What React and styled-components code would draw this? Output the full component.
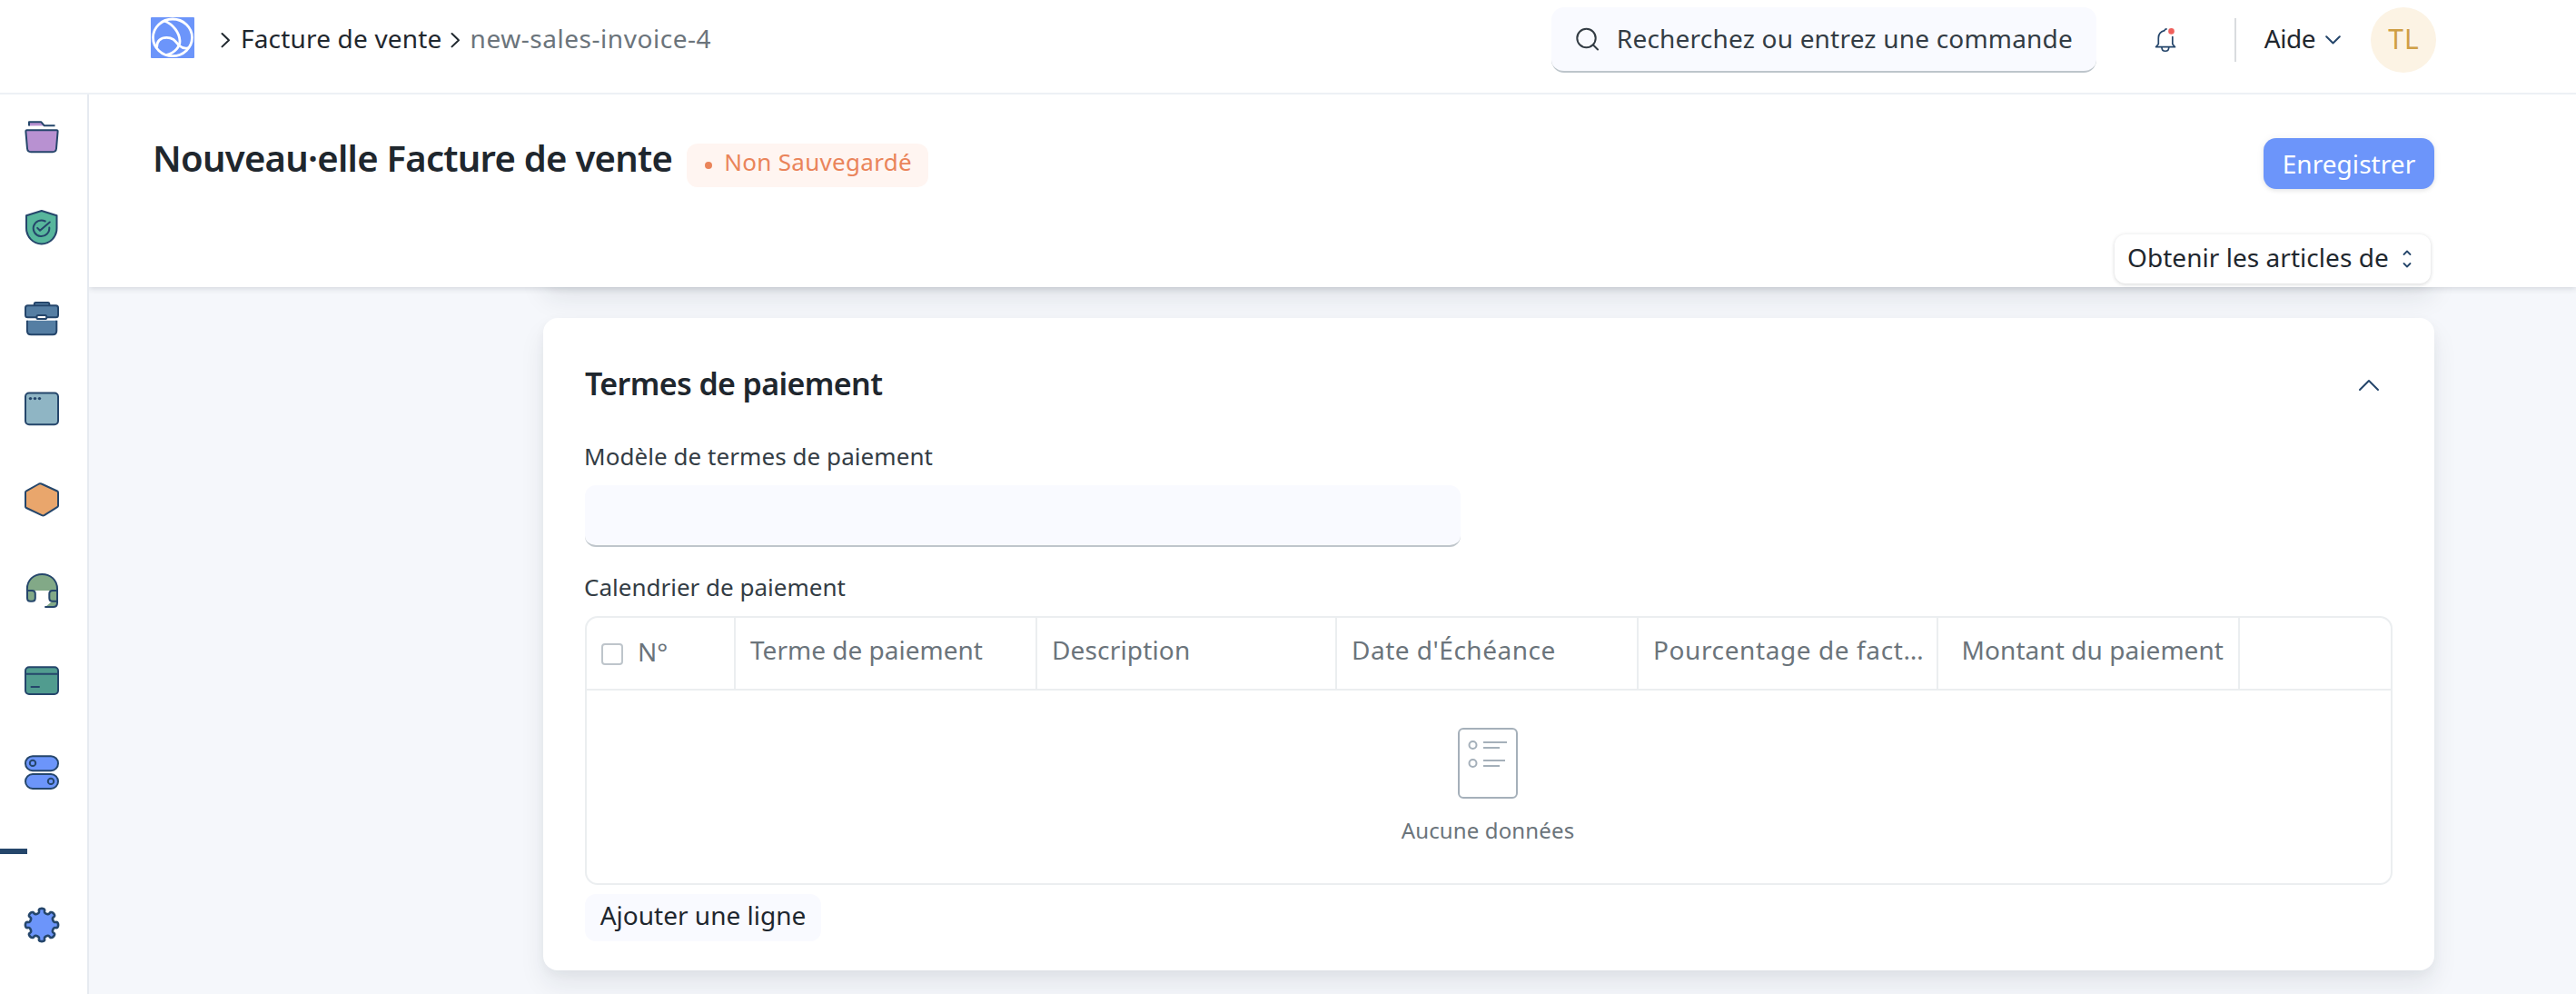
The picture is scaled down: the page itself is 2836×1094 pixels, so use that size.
import React from 'react';
import styled, { createGlobalStyle } from 'styled-components';

const ink = '#1f272e';
const navy = '#25466b';
const muted = '#6b747b';
const line = '#ebeef0';
const blue = '#6c95fa';

const GlobalStyle = createGlobalStyle`
  * { box-sizing: border-box; }
  body {
    margin: 0;
    background: #fff;
    color: ${ink};
    font-family: "Noto Sans", "Open Sans", sans-serif;
    font-size: 28px;
    line-height: 40px;
  }
  svg { display: block; flex: none; }
`;

const Page = styled.div`
  display: flex;
  flex-direction: column;
  width: 2836px;
  height: 1094px;
  overflow: hidden;
`;

const Text = styled.span`
  white-space: pre;
  letter-spacing: ${(p) => p.$ls || 0}px;
`;

/* Top bar */
const Navbar = styled.header`
  display: flex;
  justify-content: space-between;
  height: 104px;
  padding: 8px 154px 22px 166px;
  border-bottom: 2px solid #edf1f5;
`;

const Breadcrumbs = styled.nav`
  display: flex;
  align-items: center;
  height: 66px;
`;

const Logo = styled.svg`
  margin: 0 29px 0 0;
`;

const Crumb = styled(Text)`
  margin: 0 9px 0 11px;
  padding-top: 1px;
  color: ${(p) => (p.$current ? muted : ink)};
`;

const CrumbChevron = styled.svg`
  margin-top: 5px;
`;

const NavTools = styled.div`
  display: flex;
  align-items: center;
  height: 72px;
`;

const SearchBox = styled.div`
  display: flex;
  align-items: center;
  gap: 20px;
  width: 600px;
  height: 72px;
  padding: 0 27px;
  border-radius: 14px;
  background: #f9faff;
  border-bottom: 2px solid #bdc5cb;
  color: #333c44;
`;

const SearchText = styled(Text)`
  padding-bottom: 3px;
`;

const Bell = styled.svg`
  margin: 0 64px;
`;

const Divider = styled.span`
  width: 2px;
  height: 48px;
  background: #d9dcdf;
`;

const HelpMenu = styled.div`
  display: flex;
  align-items: center;
  gap: 11px;
  margin: 0 33px 0 31px;
`;

const HelpText = styled(Text)`
  padding-bottom: 4px;
`;

const Avatar = styled.div`
  display: flex;
  align-items: center;
  justify-content: center;
  width: 72px;
  height: 72px;
  padding: 0 0 3px 1px;
  border-radius: 50%;
  background: #fcf3e4;
  color: #cf9f45;
  font-size: 30px;
`;

/* Left rail */
const Main = styled.div`
  display: flex;
  flex: 1;
  min-height: 0;
`;

const Rail = styled.aside`
  display: flex;
  flex-direction: column;
  width: 98px;
  padding-top: 26px;
  border-right: 2px solid #e6eaf0;
`;

const RailIcons = styled.div`
  display: flex;
  flex-direction: column;
  gap: 60px;
  padding-left: 26px;
`;

const RailMark = styled.div`
  width: 30px;
  height: 6px;
  margin: 64px 0 58px;
  background: ${navy};
`;

const RailFooter = styled.div`
  padding-left: 26px;
`;

const RailSvg = styled.svg.attrs({ width: 40, height: 40, viewBox: '0 0 40 40' })`
  stroke: ${navy};
  stroke-width: 2;
  stroke-linecap: round;
  stroke-linejoin: round;
`;

/* Page head */
const Content = styled.section`
  display: flex;
  flex-direction: column;
  flex: 1;
  min-width: 0;
`;

const PageHead = styled.div`
  position: relative;
  z-index: 1;
  height: 212px;
  padding: 45px 156px 0 70px;
  background: #fff;
  box-shadow: 0 1px 7px rgba(25, 39, 52, 0.18);
  clip-path: inset(0 0 -20px 0);
`;

const HeadRow = styled.div`
  display: flex;
  align-items: flex-start;
  height: 109px;
`;

const Title = styled.h1`
  margin: 1px 0 0;
  font-size: 40px;
  font-weight: 600;
  line-height: 48px;
  letter-spacing: -0.73px;
`;

const Badge = styled.div`
  display: flex;
  align-items: center;
  gap: 12px;
  height: 48px;
  margin: 9px 0 0 16px;
  padding: 0 18px 0 20px;
  border-radius: 12px;
  background: #fff5f1;
  color: #ea845a;
  font-size: 26px;
`;

const Dot = styled.span`
  width: 8px;
  height: 8px;
  border-radius: 50%;
  background: currentColor;
`;

const BadgeText = styled(Text)`
  padding: 0 0 8px 1px;
`;

const SaveButton = styled.button`
  width: 188px;
  height: 56px;
  margin: 3px 0 0 auto;
  padding: 0 0 1px;
  border: 0;
  border-radius: 14px;
  background: ${blue};
  box-shadow: 0 2px 4px rgba(0, 0, 0, 0.08), 0 0 10px rgba(25, 39, 52, 0.05);
  color: #fff;
  font: inherit;
`;

const SelectRow = styled.div`
  display: flex;
  justify-content: flex-end;
  padding-right: 4px;
`;

const SelectButton = styled.button`
  display: flex;
  align-items: center;
  gap: 15px;
  height: 54px;
  padding: 0 19px 0 14px;
  width: 348px;
  border: 0;
  border-radius: 12px;
  background: #fff;
  box-shadow: 0 2px 4px rgba(0, 0, 0, 0.08), 0 0 4px rgba(25, 39, 52, 0.1);
  color: ${ink};
  font: inherit;
`;

const SelectText = styled(Text)`
  padding-bottom: 4px;
`;

/* Form */
const Body = styled.div`
  flex: 1;
  min-height: 0;
  padding-left: 500px;
  overflow: hidden;
  background: #f5f7fb;
`;

const Card = styled.div`
  width: 2082px;
  border-radius: 16px;
  background: #fff;
  box-shadow: 0 16px 28px rgba(25, 39, 52, 0.08), 0 4px 12px rgba(25, 39, 52, 0.04);
`;

const PreviousCard = styled(Card)`
  height: 80px;
  margin-top: -82px;
`;

const FormCard = styled(Card)`
  height: 718px;
  margin-top: 36px;
  padding: 48px 46px 0;
`;

const SectionHead = styled.div`
  display: flex;
  align-items: center;
  justify-content: space-between;
  height: 50px;
  padding: 1px 14px 0 0;
`;

const SectionTitle = styled.h2`
  margin: 0;
  padding-bottom: 4px;
  font-size: 34px;
  font-weight: 600;
  letter-spacing: -0.62px;
`;

const Label = styled.div`
  height: 40px;
  margin: ${(p) => p.$top}px 0 12px -1px;
  color: #333c44;
  font-size: 26px;
`;

const Input = styled.div`
  width: 964px;
  height: 68px;
  border-radius: 12px;
  border-bottom: 2px solid #bfc6cb;
  background: #f9faff;
`;

const Table = styled.div`
  height: 296px;
  border: 2px solid ${line};
  border-radius: 14px;
  color: ${muted};
`;

const TableHead = styled.div`
  display: grid;
  grid-template-columns: 164px 332px 330px 332px 330px 332px 1fr;
  height: 80px;
  border-bottom: 2px solid ${line};
`;

const HeadCell = styled.div`
  display: flex;
  align-items: center;
  justify-content: ${(p) => (p.$end ? 'flex-end' : 'flex-start')};
  padding: 0 16px 8px;
  border-right: 2px solid ${line};
  &:last-child { border-right: 0; }
`;

const IndexCell = styled(HeadCell)`
  gap: 16px;
  padding-bottom: 0;
`;

const IndexText = styled(Text)`
  padding-bottom: 4px;
`;

const Checkbox = styled.span`
  width: 24px;
  height: 24px;
  margin-top: 2px;
  border: 2px solid #bec5cb;
  border-radius: 4px;
`;

const Empty = styled.div`
  display: flex;
  flex-direction: column;
  align-items: center;
  gap: 14px;
  padding: 40px 2px 0 0;
  font-size: 24px;
`;

const AddButton = styled.button`
  width: 260px;
  height: 52px;
  margin-top: 10px;
  padding: 0 0 6px;
  border: 0;
  border-radius: 12px;
  background: #f9faff;
  color: ${ink};
  font: inherit;
`;

const gearPath = (() => {
  const pts = [];
  for (let i = 0; i < 240; i += 1) {
    const a = (i / 240) * Math.PI * 2;
    const b = a + 0.06 * Math.sin(16 * a);
    const r = 15.7 + 2.4 * Math.cos(8 * a);
    pts.push(`${(20 + r * Math.cos(b)).toFixed(2)} ${(20 + r * Math.sin(b)).toFixed(2)}`);
  }
  return `M${pts.join('L')}Z`;
})();

const Chevron = () => (
  <CrumbChevron width="11" height="18" viewBox="0 0 11 18" fill="none" stroke={ink} strokeWidth="2" strokeLinecap="round" strokeLinejoin="round">
    <path d="M1.5 2 9 9.2 1.5 16.4" />
  </CrumbChevron>
);

const columns = [
  { title: 'Terme de paiement', ls: 0 },
  { title: 'Description', ls: 0.16 },
  { title: "Date d'Échéance", ls: 0.5 },
  { title: 'Pourcentage de fact…', ls: 0.6 },
  { title: 'Montant du paiement', ls: 0.06, end: true },
];

const RailMenu = () => (
  <RailIcons>
    <RailSvg fill="#b891d1">
      <path d="M6 8.6V4.3h13.4l3.4 4H34.500" strokeLinecap="butt" />
      <path d="M3.600 13.300h32.800q1.300 0 1.200 1.500L36 33.500q-.4 3.700-4 3.700H8q-3.600 0-4-3.700L2.400 14.800q-.1-1.500 1.200-1.500Z" />
    </RailSvg>
    <RailSvg fill="#57b69c">
      <path d="M19.800 2 36.500 7.200V21c0 9.700-7.400 17.400-16.700 17.400S3 30.700 3 21V7.200Z" />
      <path d="M23.700 13.500A8.800 8.800 0 1 0 28.300 20.500M15.200 20.900l2.800 2.900L28.800 14.500" fill="none" />
    </RailSvg>
    <RailSvg fill="#557ea3">
      <path d="M11.800 6V4.400q0-1.500 1.500-1.500h13.500q1.500 0 1.500 1.500V6" />
      <rect x="2" y="6.300" width="36" height="12.900" rx="2.500" />
      <path d="M3.900 22.700V34q0 4.300 4.300 4.300H32q4.300 0 4.300-4.300V22.700" strokeLinecap="butt" />
      <rect x="14.500" y="17" width="10.700" height="4" rx="1.600" fill="#fff" />
    </RailSvg>
    <RailSvg fill="#8fb5c4">
      <rect x="2" y="2.600" width="36" height="34.600" rx="4" />
      <g fill={navy} stroke="none">
        <circle cx="7.500" cy="8.600" r="1.700" /><circle cx="12.500" cy="8.600" r="1.700" /><circle cx="17.500" cy="8.600" r="1.700" />
      </g>
    </RailSvg>
    <RailSvg fill="#e9a66c">
      <path d="M17 2.500q1.300-.7 2.600 0L37 10.500q1 .5 1 1.500v14.600q0 1-1 1.600L22.700 37.200q-1.300.7-2.600 0L3 29q-1-.5-1-1.500V12q0-1.200 1-1.700Z" />
    </RailSvg>
    <RailSvg fill="#82a987">
      <path d="M3.900 20C3.900 8 11 2 20.300 2S37 8 37 20" stroke="none" />
      <path d="M37 28v5.300Q37 38 32.500 38H24l7-6Z" stroke="none" />
      <path d="M3.900 20v-2C3.900 8.500 11 1.900 20.300 1.900S37 8.500 37 18v15.500q0 4.500-4.500 4.500H23.300" fill="none" strokeLinecap="butt" />
      <path d="M4 19.900h5.200q3.600 0 3.600 3.600v4.700q0 3.500-3.600 3.500H7.500Q4 31.700 4 28.200Z" />
      <path d="M37 19.900h-5q-3.700 0-3.700 3.600v4.700q0 3.500 3.600 3.500H37Z" />
    </RailSvg>
    <RailSvg fill="#519c8f">
      <rect x="2" y="4.200" width="36" height="29.700" rx="4" />
      <path d="M2 11.800h36M8.500 26h8.500" />
    </RailSvg>
    <RailSvg fill={blue}>
      <rect x="2" y="2.200" width="36" height="16" rx="8" />
      <rect x="2" y="22" width="36" height="16" rx="8" />
      <circle cx="10" cy="9.900" r="3.200" fill="none" /><circle cx="30" cy="29.900" r="3.200" fill="none" />
    </RailSvg>
  </RailIcons>
);

export default function App() {
  return (
    <Page>
      <GlobalStyle />
      <Navbar>
        <Breadcrumbs>
          <Logo width="48" height="45" viewBox="0 0 48 45" fill="none" stroke="#fff" strokeWidth="2.800">
            <rect width="48" height="45" rx="1" fill={blue} stroke="none" />
            <ellipse cx="24" cy="22.300" rx="21.500" ry="20.300" />
            <path d="M15 4C25 8 31.500 17 32 26c.2 6-5 13-15 15.500" />
            <path d="M6.500 33.500C6.500 26 11 22.300 17.500 22.300 25 22.300 27.500 27 31 31q5.500 4.500 10.500 2.500" />
          </Logo>
          <Chevron />
          <Crumb $ls={0.18}>Facture de vente</Crumb>
          <Chevron />
          <Crumb $ls={0.54} $current>new-sales-invoice-4</Crumb>
        </Breadcrumbs>
        <NavTools>
          <SearchBox>
            <svg width="25" height="26" viewBox="0 0 25 26" fill="none" stroke="#333c44" strokeWidth="2" strokeLinecap="round">
              <circle cx="11.500" cy="12" r="10.200" /><path d="m19 19.500 5 5" />
            </svg>
            <SearchText $ls={0.2}>Recherchez ou entrez une commande</SearchText>
          </SearchBox>
          <Bell width="24" height="28" viewBox="0 0 24 28" fill="none" stroke={navy} strokeWidth="1.700" strokeLinecap="round" strokeLinejoin="round">
            <path d="M13 1.900c-1.200 0-1.800.6-2 1.800C6.500 4.800 4.300 8 4.300 12v6.500L1.500 21.700h21L19.800 18.500v-8" />
            <path d="M8 22.200c0 5.400 7.700 5.400 7.700 0" />
            <circle cx="18.500" cy="4.400" r="3.300" fill="#f0605c" stroke="none" />
          </Bell>
          <Divider />
          <HelpMenu>
            <HelpText $ls={-0.5}>Aide</HelpText>
            <svg width="17" height="10" viewBox="0 0 17 10" fill="none" stroke={navy} strokeWidth="2" strokeLinecap="round" strokeLinejoin="round">
              <path d="m1.200 1.200 7.300 7.300 7.300-7.300" />
            </svg>
          </HelpMenu>
          <Avatar><Text $ls={1}>TL</Text></Avatar>
        </NavTools>
      </Navbar>
      <Main>
        <Rail>
          <RailMenu />
          <RailMark />
          <RailFooter>
            <RailSvg fill={blue}><path d={gearPath} strokeWidth="2.600" /></RailSvg>
          </RailFooter>
        </Rail>
        <Content>
          <PageHead>
            <HeadRow>
              <Title>Nouveau·elle Facture de vente</Title>
              <Badge><Dot /><BadgeText $ls={0.3}>Non Sauvegardé</BadgeText></Badge>
              <SaveButton><Text $ls={0.06}>Enregistrer</Text></SaveButton>
            </HeadRow>
            <SelectRow>
              <SelectButton>
                <SelectText $ls={0.04}>Obtenir les articles de</SelectText>
                <svg width="10" height="20" viewBox="0 0 10 20" fill="none" stroke={navy} strokeWidth="1.800" strokeLinecap="round" strokeLinejoin="round">
                  <path d="M1.500 5 5 1.500 8.500 5M1.500 15 5 18.500 8.500 15" />
                </svg>
              </SelectButton>
            </SelectRow>
          </PageHead>
          <Body>
            <PreviousCard />
            <FormCard>
              <SectionHead>
                <SectionTitle>Termes de paiement</SectionTitle>
                <svg width="24" height="14" viewBox="0 0 24 14" fill="none" stroke={navy} strokeWidth="2" strokeLinecap="round" strokeLinejoin="round">
                  <path d="M2 12 12 2l10 10" />
                </svg>
              </SectionHead>
              <Label $top={34}><Text $ls={0.06}>Modèle de termes de paiement</Text></Label>
              <Input />
              <Label $top={24}><Text>Calendrier de paiement</Text></Label>
              <Table>
                <TableHead>
                  <IndexCell><Checkbox /><IndexText>N°</IndexText></IndexCell>
                  {columns.map((c) => (
                    <HeadCell key={c.title} $end={c.end}><Text $ls={c.ls}>{c.title}</Text></HeadCell>
                  ))}
                  <HeadCell />
                </TableHead>
                <Empty>
                  <svg width="68" height="80" viewBox="0 0 68 80" fill="none" stroke="#a5b0ba" strokeWidth="2">
                    <rect x="2" y="2" width="64" height="76" rx="5" />
                    <circle cx="17.500" cy="20" r="4" /><circle cx="17.500" cy="40" r="4" />
                    <path d="M29 17h26M29 23h18M29 37h24M29 43h18" />
                  </svg>
                  <Text $ls={0.14}>Aucune données</Text>
                </Empty>
              </Table>
              <AddButton><Text>Ajouter une ligne</Text></AddButton>
            </FormCard>
          </Body>
        </Content>
      </Main>
    </Page>
  );
}
